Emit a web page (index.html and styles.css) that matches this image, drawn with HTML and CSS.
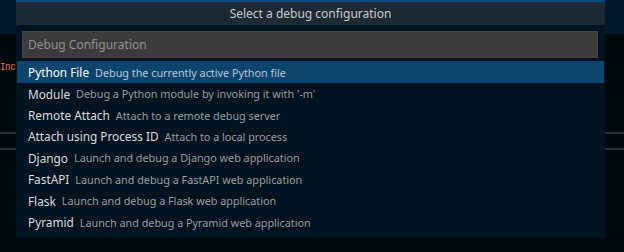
FILE: index.html
```html
<!DOCTYPE html>
<html lang="en">
<head>
    <meta charset="UTF-8">
    <title>Select a debug configuration</title>
    <link rel="stylesheet" href="styles.css">
</head>
<body>
<!-- editor behind the quick pick -->
<div class="editor">
    <div class="editor-top"></div>
    <div class="code-line">Inc</div>
    <div class="rule rule-1"></div>
    <div class="rule rule-2"></div>
</div>

<!-- quick pick -->
<div class="quick-pick">
    <div class="qp-title">Select a debug configuration</div>
    <div class="qp-input-wrap">
        <input type="text" class="qp-input" placeholder="Debug Configuration">
    </div>
    <ul class="qp-list">
        <li class="qp-item selected"><span class="label">Python File</span><span class="desc">Debug the currently active Python file</span></li>
        <li class="qp-item"><span class="label">Module</span><span class="desc">Debug a Python module by invoking it with '-m'</span></li>
        <li class="qp-item"><span class="label">Remote Attach</span><span class="desc">Attach to a remote debug server</span></li>
        <li class="qp-item"><span class="label">Attach using Process ID</span><span class="desc">Attach to a local process</span></li>
        <li class="qp-item"><span class="label">Django</span><span class="desc">Launch and debug a Django web application</span></li>
        <li class="qp-item"><span class="label">FastAPI</span><span class="desc">Launch and debug a FastAPI web application</span></li>
        <li class="qp-item"><span class="label">Flask</span><span class="desc">Launch and debug a Flask web application</span></li>
        <li class="qp-item"><span class="label">Pyramid</span><span class="desc">Launch and debug a Pyramid web application</span></li>
    </ul>
</div>
</body>
</html>
```

FILE: styles.css
```css
body {
    margin: 0;
    padding: 0;
    background-color: #00080c;
    font-family: 'Noto Sans', 'Open Sans', sans-serif;
    width: 624px;
    height: 252px;
    position: relative;
    overflow: hidden;
}

/* editor behind */
.editor {
    position: absolute;
    inset: 0;
}

.editor-top {
    height: 34px;
    background-color: #001a2c;
}

.code-line {
    position: absolute;
    left: 0;
    top: 62px;
    font-family: 'Liberation Mono', monospace;
    font-size: 9px;
    letter-spacing: -0.3px;
    line-height: 13px;
    color: #ee7757;
    transform: scaleY(1.3);
}

.rule {
    position: absolute;
    left: 0;
    right: 0;
    height: 2px;
    background-color: #2a2f33;
}

.rule-1 {
    top: 132px;
}

.rule-2 {
    top: 148px;
}

/* quick pick */
.quick-pick {
    position: absolute;
    left: 16px;
    top: 0;
    width: 589px;
    height: 238px;
    background-color: #00141f;
    border-top: 2px solid #0b4a78;
    box-sizing: border-box;
}

.qp-title {
    height: 23px;
    line-height: 23px;
    background-color: #1e2a33;
    color: #cccccc;
    font-size: 12px;
    text-align: center;
}

.qp-input-wrap {
    padding: 6px 7px 3px 6px;
}

.qp-input {
    display: block;
    width: 100%;
    height: 27px;
    box-sizing: border-box;
    background-color: #3c3c3c;
    border: 1px solid #444444;
    color: #cccccc;
    font-family: 'Noto Sans', 'Open Sans', sans-serif;
    font-size: 12px;
    padding: 0 5px;
    outline: none;
}

.qp-input::placeholder {
    color: #8e8e8e;
}

.qp-list {
    list-style: none;
    margin: 0 1px;
    padding: 0;
}

.qp-item {
    height: 21.4px;
    display: flex;
    align-items: center;
    padding-left: 11px;
    white-space: nowrap;
}

.qp-item.selected {
    height: 22px;
    background-color: #0a4570;
}

.label {
    font-size: 11.8px;
    color: #dcdcdc;
    margin-right: 6px;
}

.desc {
    font-size: 10.8px;
    color: #9c9c9c;
}

.selected .label {
    color: #ffffff;
}

.selected .desc {
    color: #b9c8d6;
}
```
